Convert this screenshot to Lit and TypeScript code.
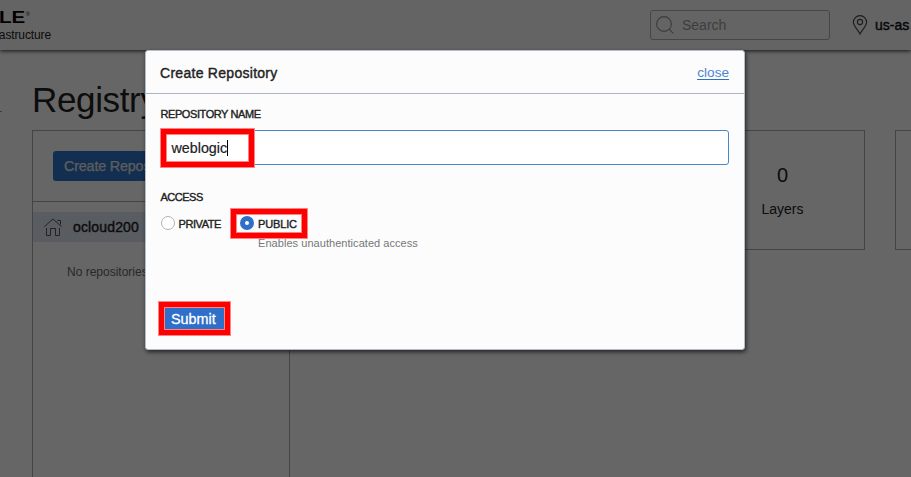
import { LitElement, html, css } from "lit";
import { customElement } from "lit/decorators.js";

@customElement("app-root")
export class AppRoot extends LitElement {
  static styles = css`
    :host { display: block; position: relative; width: 911px; height: 477px; overflow: hidden; background: #fff; color: #222; font-family: "Liberation Sans", Arial, sans-serif; }
    * { box-sizing: border-box; }
    span, h1, h2, a, p { white-space: nowrap; display: block; margin: 0; flex: none; }
    .med { -webkit-text-stroke: 0.4px currentColor; }
    .top { position: relative; height: 50px; display: flex; background: #fbfbfb; box-shadow: 0 1px 4px #333; padding-top: 10px; }
    .brand { width: 650px; }
    .logo { display: flex; height: 17px; color: #000; }
    .word { font: 700 16px/16px "Liberation Sans", sans-serif; transform: scaleX(1.28); transform-origin: 0 0; width: 27px; margin-left: -1px; }
    .reg { font-size: 5px; line-height: 8px; }
    .sub { font-size: 12px; line-height: 16px; width: 51px; display: flex; justify-content: flex-end; letter-spacing: -0.12px; }
    .search { width: 180px; height: 30px; border: 1px solid #b0b0b0; border-radius: 3px; display: flex; align-items: center; color: #9a9a9a; font-size: 14px; padding-left: 5px; gap: 8px; }
    .region { display: flex; margin-left: 22px; gap: 7px; height: 30px; align-items: center; font-size: 14px; color: #111; }
    svg { display: block; flex: none; fill: none; }
    .main { display: grid; grid-template-columns: 32px 258px 1fr; grid-template-rows: 80px 1fr; height: 427px; }
    .tick { width: 2px; height: 1px; background: #999; margin-top: 61px; }
    h1 { font-size: 35px; font-weight: 400; line-height: 40px; padding-top: 30px; grid-column: 2 / 4; letter-spacing: -0.35px; }
    .side { grid-column: 2; border: 1px solid #aaa; border-bottom: 0; }
    .act { height: 71px; padding: 20px; border-bottom: 1px solid #aaa; }
    .create { width: 150px; height: 30px; border-radius: 3px; background: #2d73ca; color: #e8e8e8; font-size: 14.3px; line-height: 30px; padding-left: 11px; letter-spacing: -0.15px; -webkit-text-stroke: 0.25px currentColor; }
    .home { margin-top: 10px; height: 30px; background: #dfe8f5; display: flex; align-items: center; padding-left: 11px; gap: 11px; font-size: 14px; color: #222; letter-spacing: 0.15px; }
    .none { font-size: 12px; line-height: 16px; margin: 22px 0 0 34px; color: #666; }
    .stats { display: flex; gap: 30px; padding-left: 410px; }
    .card { width: 165px; height: 120px; border: 1px solid #aaa; flex: none; text-align: center; }
    .num { font-size: 20px; line-height: 24px; margin-top: 32px; }
    .lab { font-size: 14px; line-height: 18px; margin-top: 13px; }
    .shade { position: absolute; inset: 0; background: rgba(0,0,0,.6); }
    .modal { position: absolute; left: 145px; top: 50px; width: 600px; height: 300px; border: 1px solid #b4bdc8; border-radius: 3px; background: #fcfcfc; box-shadow: 1px 2px 4px rgba(0,0,0,.65); }
    .mh { height: 43px; border-bottom: 1px solid #adb5c0; display: flex; justify-content: space-between; align-items: center; padding: 2px 15px 0 14px; }
    h2 { font-size: 14px; font-weight: 400; line-height: 18px; letter-spacing: 0.28px; }
    .close { color: #4b86d0; font-size: 13.6px; line-height: 13px; border-bottom: 1px solid #2d6fc4; }
    .body { padding: 0 15px; }
    .cap { font-size: 11px; line-height: 14px; letter-spacing: -0.42px; }
    .name { margin-top: 13px; margin-left: -0.5px; }
    .field { position: relative; margin-top: 9px; height: 35px; border: 1px solid #4788c9; border-radius: 3px; background: #fff; display: flex; align-items: center; padding-left: 9.5px; font-size: 14.3px; -webkit-text-stroke: 0.2px currentColor; }
    .caret { width: 1px; height: 16px; background: #000; }
    .ring { position: absolute; border: 5px solid #f00; outline: 1px solid #ff8585; box-shadow: inset 0 0 0 1px #ff8585; }
    .r1 { left: -1px; top: -2px; width: 93px; height: 38px; }
    .r2 { left: -9px; top: -7px; width: 76px; height: 29px; }
    .r3 { left: -4px; top: -5px; width: 71px; height: 33px; }
    .access { margin-top: 25px; margin-left: -0.5px; letter-spacing: -0.5px; }
    .radios { display: flex; margin-top: 12px; height: 14px; align-items: center; }
    .dot { width: 14px; height: 14px; border: 1px solid #b0b3b8; border-radius: 50%; background: #fff; flex: none; }
    .on { border: 5px solid #2d6fc9; }
    .priv { margin-left: 3.5px; width: 61.5px; padding-top: 1px; }
    .pub { margin-left: 4px; padding-top: 1px; letter-spacing: -0.15px; }
    .pick { position: relative; display: flex; align-items: center; }
    .hint { font-size: 11px; line-height: 14px; color: #777; margin: 6px 0 0 97px; letter-spacing: 0.05px; }
    .submit { position: relative; margin: 57px 0 0 2px; width: 63px; height: 25px; background: #2d6fc9; color: #fff; font-size: 14.4px; line-height: 25px; padding-left: 8px; -webkit-text-stroke: 0.3px currentColor; }
  `;

  render() {
    return html`
      <header class="top">
        <div class="brand">
          <div class="logo"><span class="word">LE</span><span class="reg">®</span></div>
          <div class="sub"><span>astructure</span></div>
        </div>
        <div class="search">
          <svg width="18" height="18" viewBox="0 0 18 18" stroke="#929292" stroke-width="1.1"><circle cx="8" cy="8" r="7.4"/><path d="M13.2 13.2 17.3 17.3"/></svg>
          <span>Search</span>
        </div>
        <div class="region">
          <svg width="16" height="20" viewBox="0 0 16 20" stroke="#444" stroke-width="1.1"><path d="M8 19C6.5 15.5 1.4 11 1.4 7.2a6.6 6.6 0 0 1 13.2 0C14.6 11 9.5 15.5 8 19Z"/><circle cx="8" cy="7" r="2.6"/></svg>
          <span class="med">us-as</span>
        </div>
      </header>
      <div class="main">
        <div class="tick"></div>
        <h1>Registry</h1>
        <section class="side">
          <div class="act"><div class="create">Create Repository</div></div>
          <div class="home">
            <svg width="18" height="19" viewBox="0 0 18 19" stroke="#555" stroke-width="1"><path d="M.4 8.7 9 .9l8.6 7.8M2.5 10v7.5h4v-7h5v7h4V10M13.5 2.5h3v4"/></svg>
            <span class="med">ocloud200</span>
          </div>
          <p class="none">No repositories</p>
        </section>
        <section class="stats">
          <div class="card"><p class="num">0</p><p class="lab">Layers</p></div>
          <div class="card"></div>
        </section>
      </div>
      <div class="shade"></div>
      <section class="modal">
        <div class="mh"><h2 class="med">Create Repository</h2><a class="close">close</a></div>
        <div class="body">
          <p class="cap med name">REPOSITORY NAME</p>
          <div class="field"><span>weblogic</span><i class="caret"></i><i class="ring r1"></i></div>
          <p class="cap med access">ACCESS</p>
          <div class="radios">
            <i class="dot"></i><span class="cap med priv">PRIVATE</span>
            <div class="pick"><i class="dot on"></i><span class="cap med pub">PUBLIC</span><i class="ring r2"></i></div>
          </div>
          <p class="hint">Enables unauthenticated access</p>
          <div class="submit">Submit<i class="ring r3"></i></div>
        </div>
      </section>
    `;
  }
}
